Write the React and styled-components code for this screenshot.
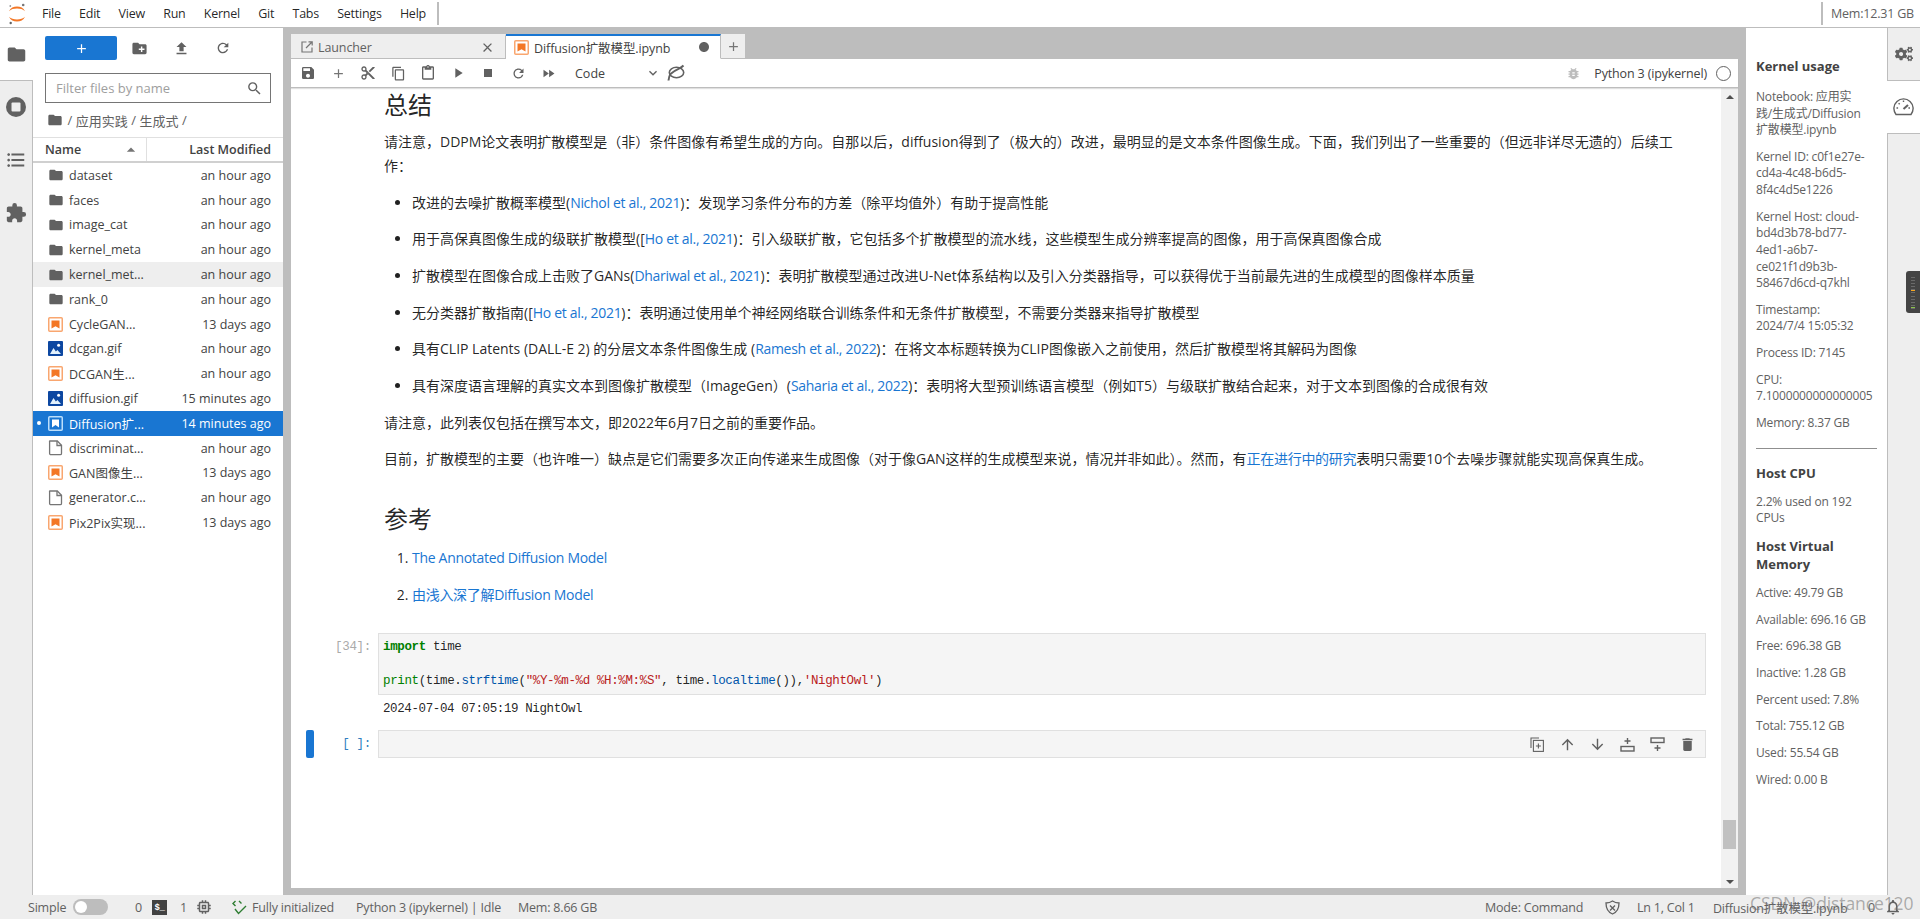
import React from 'react'
import styled, { createGlobalStyle } from 'styled-components'
import {
  MdFolder, MdAdd, MdCreateNewFolder, MdFileUpload, MdRefresh, MdSearch, MdFormatListBulleted,
  MdExtension, MdSave, MdContentCut, MdContentCopy, MdContentPaste, MdPlayArrow, MdStop,
  MdFastForward, MdKeyboardArrowDown, MdClose, MdArrowUpward, MdArrowDownward, MdDelete,
  MdBugReport, MdOutlineMemory, MdOutlineNotifications, MdArrowDropUp, MdCircle,
} from 'react-icons/md'
import { FaCogs } from 'react-icons/fa'

const SANS = `"Open Sans", "Noto Sans CJK SC", sans-serif`

const GlobalStyle = createGlobalStyle`
  html, body { margin: 0; padding: 0; height: 100%; overflow: hidden; }
  body { font-family: ${SANS}; font-size: 13px; color: rgba(0,0,0,.87); background: #fff; }
  * { box-sizing: border-box; }
`

const Page = styled.div`
  position: relative;
  display: flex;
  flex-direction: column;
  width: 1920px;
  height: 919px;
  overflow: hidden;
`

/* ---------- top menu ---------- */
const TopBar = styled.div`
  display: flex;
  align-items: center;
  height: 28px;
  flex: none;
  border-bottom: 1px solid #bdbdbd;
  padding-left: 8px;
`
const MenuItems = styled.div`
  display: flex;
  margin-left: 16px;
  gap: 18.3px;
  align-items: center;
  font-size: 12.5px;
  letter-spacing: -.25px;
  padding-right: 11px;
  border-right: 2px solid #bdbdbd;
  height: 23px;
`
const MemTop = styled.div`
  margin-left: auto;
  height: 23px;
  line-height: 23px;
  border-left: 2px solid #bdbdbd;
  padding: 0 6px 0 8px;
  font-size: 12.5px;
  letter-spacing: -.2px;
  color: #616161;
  white-space: nowrap;
`

const Body = styled.div`
  display: flex;
  flex: 1;
  min-height: 0;
  background: #bdbdbd;
`

/* ---------- left activity bar ---------- */
const SideBar = styled.div`
  width: 33px;
  flex: none;
  background: #eee;
  display: flex;
  flex-direction: column;
  align-items: center;
  color: #616161;
  font-size: 20px;
`
const SideActive = styled.div`
  width: 100%;
  height: 52px;
  background: #fff;
  display: flex;
  align-items: center;
  justify-content: center;
  font-size: 21px;
  padding-right: 1px;
`
const SideItem = styled.div`
  width: 100%;
  height: 53px;
  border-right: 1px solid #bdbdbd;
  display: flex;
  align-items: center;
  justify-content: center;
  font-size: ${p => p.$size || 20}px;
`
const SideRest = styled.div`
  flex: 1;
  width: 100%;
  border-right: 1px solid #bdbdbd;
`
const SideFirst = styled(SideItem)`
  border-top: 1px solid #bdbdbd;
`

/* ---------- file browser ---------- */
const FilePanel = styled.div`
  width: 250px;
  flex: none;
  background: #fff;
  display: flex;
  flex-direction: column;
  margin-right: 8px;
`
const FileTools = styled.div`
  display: flex;
  align-items: center;
  padding: 8px 0 0 12px;
  height: 32px;
  color: #616161;
  flex: none;
`
const NewButton = styled.div`
  width: 72px;
  height: 24px;
  border-radius: 2px;
  background: #1976d2;
  color: #fff;
  display: flex;
  align-items: center;
  justify-content: center;
  font-size: 15px;
  margin-right: 1px;
`
const ToolIcon = styled.div`
  width: 42px;
  display: flex;
  justify-content: center;
  font-size: ${p => p.$size || 17}px;
  color: #616161;
`
const FilterBox = styled.div`
  margin: 13px 12px 0;
  height: 30px;
  border: 1px solid #757575;
  display: flex;
  align-items: center;
  justify-content: space-between;
  padding: 0 7px 0 10px;
  color: #9e9e9e;
  font-size: 13px;
  flex: none;
  svg { color: #616161; font-size: 17px; }
`
const Crumbs = styled.div`
  display: flex;
  align-items: center;
  gap: 3.5px;
  height: 34px;
  padding-left: 14px;
  font-size: 13px;
  color: #616161;
  flex: none;
  svg { font-size: 16px; margin-right: 1px; }
`
const ListHead = styled.div`
  display: flex;
  height: 26px;
  flex: none;
  border-top: 1px solid #e0e0e0;
  border-bottom: 2px solid #d0d0d0;
  font-size: 12.5px;
  font-weight: 600;
  color: #424242;
  line-height: 24px;
`
const HeadName = styled.div`
  width: 114px;
  padding-left: 12px;
  border-right: 1px solid #e0e0e0;
  display: flex;
  justify-content: space-between;
  padding-right: 5px;
  align-items: center;
  svg { color: #757575; font-size: 20px; }
`
const HeadDate = styled.div`
  flex: 1;
  text-align: right;
  padding-right: 12px;
  white-space: nowrap;
`
const Row = styled.div`
  position: relative;
  display: flex;
  align-items: center;
  height: 24.8px;
  padding: 0 12px 0 15px;
  font-size: 12.5px;
  white-space: nowrap;
  color: ${p => (p.$selected ? '#fff' : '#424242')};
  background: ${p => (p.$selected ? '#1976d2' : p.$hover ? '#eee' : 'transparent')};
`
const RowIcon = styled.span`
  width: 21px;
  display: flex;
  flex: none;
  font-size: 16px;
  color: #616161;
`
const RowName = styled.span`
  flex: 1;
  min-width: 0;
`
const RowDate = styled.span`
  flex: none;
`
const RunDot = styled.span`
  position: absolute;
  left: 4px;
  top: 10px;
  width: 4px;
  height: 4px;
  border-radius: 50%;
  background: #fff;
`

/* ---------- notebook ---------- */
const Main = styled.div`
  flex: 1;
  min-width: 0;
  display: flex;
  flex-direction: column;
  padding-top: 6px;
`
const TabBar = styled.div`
  display: flex;
  height: 25px;
  flex: none;
`
const Tab = styled.div`
  width: 215px;
  display: flex;
  align-items: center;
  padding: 0 10px 0 ${p => (p.$active ? 8 : 10)}px;
  font-size: 12.5px;
  color: ${p => (p.$active ? '#424242' : '#616161')};
  background: ${p => (p.$active ? '#fff' : '#eee')};
  border-top: 2px solid ${p => (p.$active ? '#1976d2' : '#eee')};
  border-bottom: 1px solid ${p => (p.$active ? '#fff' : '#bdbdbd')};
  border-right: 1px solid #bdbdbd;
  white-space: nowrap;
`
const TabTitle = styled.span`
  flex: 1;
  margin-left: 5px;
  letter-spacing: -.1px;
`
const PlusTab = styled.div`
  width: 24px;
  background: #eee;
  border-bottom: 1px solid #bdbdbd;
  display: flex;
  align-items: center;
  justify-content: center;
  color: #757575;
  font-size: 15px;
`
const Toolbar = styled.div`
  display: flex;
  align-items: center;
  height: 29px;
  flex: none;
  background: #fff;
  border-bottom: 1px solid #bdbdbd;
  box-shadow: 0 1px 1px rgba(0,0,0,.12);
  padding-left: 2px;
  color: #616161;
  z-index: 1;
`
const TBtn = styled.div`
  width: 30px;
  display: flex;
  justify-content: center;
  align-items: center;
  font-size: ${p => p.$size || 16}px;
  color: ${p => p.$color || '#616161'};
`
const CellType = styled.div`
  width: 86px;
  display: flex;
  align-items: center;
  justify-content: space-between;
  margin-left: 12px;
  font-size: 12.5px;
  color: #424242;
  svg { font-size: 16px; color: #616161; }
`
const KernelName = styled.div`
  margin-left: auto;
  display: flex;
  align-items: center;
  gap: 9px;
  padding-right: 7px;
  font-size: 12.5px;
  letter-spacing: -.15px;
  color: #424242;
  white-space: nowrap;
`
const BugIcon = styled.span`
  display: flex;
  color: #bdbdbd;
  font-size: 15px;
  margin-right: 4px;
`
const KernelDot = styled.span`
  width: 15px;
  height: 15px;
  border: 1.5px solid #616161;
  border-radius: 50%;
`
const NotebookWrap = styled.div`
  flex: 1;
  min-height: 0;
  display: flex;
  background: #fff;
`
const Notebook = styled.div`
  flex: 1;
  min-width: 0;
  overflow: hidden;
  padding: 0 15px 0 15px;
`
const Prose = styled.div`
  padding: 2px 32px 0 78px;
  font-size: 14px;
  line-height: 24px;
  color: rgba(0,0,0,.87);
`
const H2 = styled.h2`
  margin: 0 0 10px;
  font-size: 24px;
  line-height: 30px;
  font-weight: 400;
`
const H2Next = styled(H2)`
  margin: 33px 0 12px;
`
const P = styled.p`
  margin: 0 0 12.6px;
`
const Ul = styled.ul`
  margin: 0 0 9px;
  padding: 0 0 0 28px;
`
const Ol = styled.ol`
  margin: 0;
  padding: 0 0 0 28px;
`
const Li = styled.li`
  margin-bottom: 12.7px;
`
const A = styled.a`
  color: #1976d2;
  text-decoration: none;
  letter-spacing: -.3px;
`
const CellRow = styled.div`
  position: relative;
  display: flex;
  margin-top: ${p => p.$top || 0}px;
`
const CellMark = styled.div`
  position: absolute;
  left: 0;
  top: 0;
  bottom: 0;
  width: 8px;
  background: #1976d2;
  border-radius: 2px;
`
const Prompt = styled.div`
  width: 72px;
  flex: none;
  text-align: right;
  padding: 6px 7px 0 0;
  font-family: "Liberation Mono", monospace;
  font-size: 12.5px;
  letter-spacing: -.3px;
  line-height: 17px;
  color: ${p => (p.$active ? '#307fc1' : '#aaa')};
  white-space: pre;
`
const CodeBox = styled.div`
  position: relative;
  flex: 1;
  min-width: 0;
  background: #f5f5f5;
  border: 1px solid #e0e0e0;
  padding: 5px 4px;
  height: ${p => p.$h}px;
  font-family: "Liberation Mono", monospace;
  font-size: 12.5px;
  letter-spacing: -.37px;
  line-height: 17px;
  white-space: pre;
`
const Kw = styled.span`
  color: #008000;
  font-weight: ${p => (p.$bold ? 700 : 400)};
`
const Fn = styled.span`
  color: #05a;
`
const Str = styled.span`
  color: #ba2121;
`
const Output = styled.div`
  margin: 6px 0 0 72px;
  padding-left: 5px;
  height: 22px;
  font-family: "Liberation Mono", monospace;
  font-size: 12.5px;
  letter-spacing: -.39px;
  line-height: 17px;
  white-space: pre;
`
const CellTools = styled.div`
  position: absolute;
  right: 3px;
  top: 0;
  bottom: 0;
  display: flex;
  align-items: center;
  color: #616161;
  font-size: 17px;
`
const CellTool = styled.span`
  width: 30px;
  display: flex;
  justify-content: center;
`
const Scroll = styled.div`
  position: relative;
  width: 17px;
  flex: none;
  background: #f1f1f1;
  display: flex;
  flex-direction: column;
  justify-content: space-between;
  align-items: center;
  padding: 7px 0 4px;
`
const Arrow = styled.span`
  width: 0;
  height: 0;
  border-left: 4px solid transparent;
  border-right: 4px solid transparent;
  ${p => (p.$down ? 'border-top: 4px solid #505050;' : 'border-bottom: 4px solid #505050;')}
`
const Thumb = styled.div`
  position: absolute;
  left: 2px;
  right: 2px;
  top: 732px;
  height: 29px;
  background: #c1c1c1;
`
const MainBottom = styled.div`
  height: 7px;
  flex: none;
`

/* ---------- kernel usage ---------- */
const UsagePanel = styled.div`
  width: 141px;
  flex: none;
  margin-left: 8px;
  background: #fff;
  padding: 29px 10px 0;
  font-size: 12px;
  line-height: 16.6px;
  color: #616161;
  white-space: nowrap;
  letter-spacing: -.18px;
`
const UsageTitle = styled.div`
  font-weight: 700;
  color: #424242;
  margin-bottom: 12px;
  font-size: 13px;
  letter-spacing: 0;
  line-height: 18px;
`
const UsageHead = styled(UsageTitle)`
  margin-bottom: 14px;
`
const Stat = styled.div`
  margin-bottom: 10.1px;
`
const UsageHr = styled.div`
  border-top: 1px solid #8f8f8f;
  margin: 16px 0 15px;
`
const RightBar = styled.div`
  position: relative;
  width: 33px;
  flex: none;
  background: #eee;
  display: flex;
  flex-direction: column;
  color: #616161;
`
const RightTab = styled.div`
  height: 53px;
  display: flex;
  align-items: center;
  justify-content: center;
  background: ${p => (p.$active ? '#fff' : '#eee')};
  border-left: ${p => (p.$active ? 'none' : '1px solid #bdbdbd')};
  border-bottom: 1px solid #bdbdbd;
  font-size: 18px;
`
const RightRest = styled.div`
  flex: 1;
  border-left: 1px solid #bdbdbd;
`
const Gauges = styled.div`
  position: absolute;
  right: 0;
  top: 243px;
  width: 14px;
  height: 42px;
  background: #444;
  border-radius: 3px 0 0 3px;
`

/* ---------- status bar ---------- */
const StatusBar = styled.div`
  display: flex;
  align-items: center;
  height: 24px;
  flex: none;
  background: #eee;
  font-size: 12.5px;
  letter-spacing: -.2px;
  color: #616161;
  white-space: nowrap;
`
const SItem = styled.span`
  display: flex;
  align-items: center;
  width: ${p => p.$w}px;
  flex: none;
  font-size: ${p => p.$size || 12.5}px;
  color: #616161;
`
const Toggle = styled.span`
  width: 35px;
  height: 16px;
  border-radius: 8px;
  background: #bdbdbd;
  padding: 2px;
  display: flex;
  span { width: 12px; height: 12px; border-radius: 50%; background: #fff; }
`
const Term = styled.span`
  width: 15px;
  height: 15px;
  background: #424242;
  color: #fff;
  font-family: "Liberation Mono", monospace;
  font-size: 9px;
  font-weight: 700;
  line-height: 16px;
  text-align: center;
  letter-spacing: -.5px;
`
const Watermark = styled.div`
  position: absolute;
  left: 1750px;
  top: 892px;
  font-size: 17.5px;
  line-height: 22px;
  letter-spacing: -.1px;
  color: rgba(110,110,110,.55);
  white-space: nowrap;
`

/* ---------- drawn icons ---------- */
const NotebookIcon = ({ light }) => (
  <svg width="15" height="15" viewBox="0 0 15 15">
    {light ? (
      <>
        <rect x=".75" y=".75" width="13.5" height="13.5" rx="1" fill="#1976d2" stroke="#bbdefb" strokeWidth="1.5" />
        <path d="M4 3.5h7v8L7.5 9 4 11.5z" fill="#fff" />
      </>
    ) : (
      <>
        <rect x=".75" y=".75" width="13.5" height="13.5" rx="1" fill="#fff" stroke="#f9a66f" strokeWidth="1.5" />
        <path d="M3.5 3.5h8v8L7.5 9.3l-4 2.2z" fill="#f37726" />
      </>
    )}
  </svg>
)
const ImageIcon = () => (
  <svg width="15" height="15" viewBox="0 0 15 15">
    <rect width="15" height="15" rx="1" fill="#0d47a1" />
    <circle cx="10.6" cy="4.2" r="1.5" fill="#fff" />
    <path d="M2 13l3.5-6 2.4 3.6 1.5-1.6 3.6 4z" fill="#e3f2fd" />
  </svg>
)
const FileIcon = () => (
  <svg width="15" height="16" viewBox="0 0 15 16" fill="none" stroke="#757575" strokeWidth="1.3">
    <path d="M1.7 1h7.6l4.2 4.2v8.2a1.3 1.3 0 0 1-1.3 1.3H2.9a1.3 1.3 0 0 1-1.3-1.3V2.2A1.2 1.2 0 0 1 1.7 1z" />
    <path d="M9 1v4.5h4.5" />
  </svg>
)
const JupyterLogo = () => (
  <svg width="18" height="22" viewBox="0 0 18 22">
    <path d="M1 8.2C2.5 4.8 5.6 3.4 9 3.4s6.5 1.4 8 4.8C15 6.3 12.2 5.6 9 5.6S3 6.3 1 8.2z" fill="#f37726" />
    <path d="M1 13.8c1.5 3.4 4.6 4.8 8 4.8s6.5-1.4 8-4.8c-2 1.9-4.8 2.6-8 2.6s-6-.7-8-2.6z" fill="#f37726" />
    <circle cx="15.2" cy="2" r="1.3" fill="#767677" />
    <circle cx="2.3" cy="3" r=".9" fill="#989798" />
    <circle cx="2.7" cy="20" r="1.2" fill="#616262" />
  </svg>
)
const Stopped = () => (
  <svg width="20" height="20" viewBox="0 0 20 20">
    <circle cx="10" cy="10" r="10" fill="#616161" />
    <rect x="5.5" y="5.5" width="9" height="9" rx="1" fill="#eee" />
  </svg>
)
const Launch = () => (
  <svg width="12" height="12" viewBox="0 0 12 12" fill="none" stroke="#757575" strokeWidth="1.2">
    <path d="M5.5 1H1v10h10V6.5" />
    <path d="M5 7l6-6M7.5 .8h3.7v3.7" />
  </svg>
)
const Sync = () => (
  <svg width="18" height="18" viewBox="0 0 18 18" fill="none" stroke="#616161">
    <ellipse cx="9.5" cy="8.5" rx="7.2" ry="5.2" strokeWidth="1.6" />
    <path d="M16.5 1.500C12 6 10 4 3.500 10c-1.500 2-1.800 4-2 6.500" strokeWidth="2" />
  </svg>
)
const Gauge = () => (
  <svg width="21" height="18" viewBox="0 0 21 18" fill="none" stroke="#616161" strokeWidth="1.4">
    <path d="M3 16.5a9.6 9.6 0 1 1 15 0z" />
    <path d="M10.5 11l4.5-4" strokeWidth="2" />
    <path d="M10.5 2.5v1.6M3.5 10h1.6M17 10h-1.6M5.6 5.2l1.1 1.1" />
  </svg>
)
const Dup = () => (
  <svg width="14" height="15" viewBox="0 0 14 15" fill="none" stroke="#616161" strokeWidth="1.1">
    <path d="M1 11V1h8" />
    <rect x="3.4" y="3.4" width="10" height="11" />
    <path d="M8.4 6.5v5M5.900 9h5" />
  </svg>
)
const InsertAbove = () => (
  <svg width="15" height="15" viewBox="0 0 15 15" fill="none" stroke="#616161" strokeWidth="1.4">
    <rect x="1" y="9.5" width="13" height="4.5" />
    <path d="M7.5 1v6M4.5 4h6" />
  </svg>
)
const InsertBelow = () => (
  <svg width="15" height="15" viewBox="0 0 15 15" fill="none" stroke="#616161" strokeWidth="1.4">
    <rect x="1" y="1" width="13" height="4.5" />
    <path d="M7.5 8v6M4.5 11h6" />
  </svg>
)
const Shield = () => (
  <svg width="15" height="15" viewBox="0 0 15 15" fill="none" stroke="#616161" strokeWidth="1.3">
    <path d="M7.5 1C9.5 2.4 11.5 3 14 3c0 5-1.6 9-6.5 11C2.6 12 1 8 1 3c2.5 0 4.5-.6 6.5-2z" />
    <path d="M5 5.5l5 5M10 5.5l-5 5" />
  </svg>
)
const Initialized = () => (
  <svg width="16" height="15" viewBox="0 0 16 15" fill="none" stroke="#2e7d32" strokeWidth="1.4">
    <path d="M3.5 1L1 3.5 3.5 6M7 1l2.5 2.5" />
    <path d="M3 9l3.5 4.500L14 6" />
  </svg>
)
const MeterBars = () => (
  <svg width="14" height="42" viewBox="0 0 14 42">
    {[6, 9, 12, 15, 18, 21].map(y => <rect key={y} x="5" y={y} width="4" height="1" fill="#6a6a6a" />)}
    <rect x="5" y="19" width="4" height="1" fill="#f5a623" />
    {[25, 28, 31, 34, 37].map(y => <rect key={y} x="5" y={y} width="4" height="1" fill="#6a6a6a" />)}
    <rect x="5" y="36" width="4" height="1" fill="#8bc34a" />
  </svg>
)

const folders = ['dataset', 'faces', 'image_cat', 'kernel_meta', 'kernel_met...', 'rank_0']
const files = [
  { name: 'CycleGAN...', date: '13 days ago', icon: 'nb' },
  { name: 'dcgan.gif', date: 'an hour ago', icon: 'img' },
  { name: 'DCGAN生...', date: 'an hour ago', icon: 'nb' },
  { name: 'diffusion.gif', date: '15 minutes ago', icon: 'img' },
  { name: 'Diffusion扩...', date: '14 minutes ago', icon: 'nb', selected: true },
  { name: 'discriminat...', date: 'an hour ago', icon: 'file' },
  { name: 'GAN图像生...', date: '13 days ago', icon: 'nb' },
  { name: 'generator.c...', date: 'an hour ago', icon: 'file' },
  { name: 'Pix2Pix实现...', date: '13 days ago', icon: 'nb' },
]

const fileIcon = f => {
  if (f.icon === 'nb') return <NotebookIcon light={f.selected} />
  if (f.icon === 'img') return <ImageIcon />
  return <FileIcon />
}

const App = () => {
  return (
    <Page>
      <GlobalStyle />
      <TopBar>
        <JupyterLogo />
        <MenuItems>
          <span>File</span><span>Edit</span><span>View</span><span>Run</span><span>Kernel</span>
          <span>Git</span><span>Tabs</span><span>Settings</span><span>Help</span>
        </MenuItems>
        <MemTop>Mem:12.31 GB</MemTop>
      </TopBar>

      <Body>
        <SideBar>
          <SideActive><MdFolder /></SideActive>
          <SideFirst><Stopped /></SideFirst>
          <SideItem $size={22}><MdFormatListBulleted /></SideItem>
          <SideItem $size={22}><MdExtension /></SideItem>
          <SideRest />
        </SideBar>

        <FilePanel>
          <FileTools>
            <NewButton><MdAdd /></NewButton>
            <ToolIcon><MdCreateNewFolder /></ToolIcon>
            <ToolIcon><MdFileUpload /></ToolIcon>
            <ToolIcon $size={16}><MdRefresh /></ToolIcon>
          </FileTools>
          <FilterBox>Filter files by name<MdSearch /></FilterBox>
          <Crumbs><MdFolder /><span>/</span><span>应用实践</span><span>/</span><span>生成式</span><span>/</span></Crumbs>
          <ListHead>
            <HeadName>Name<MdArrowDropUp /></HeadName>
            <HeadDate>Last Modified</HeadDate>
          </ListHead>
          {folders.map((name, i) => (
            <Row key={name} $hover={i === 4}>
              <RowIcon><MdFolder /></RowIcon>
              <RowName>{name}</RowName>
              <RowDate>an hour ago</RowDate>
            </Row>
          ))}
          {files.map(f => (
            <Row key={f.name} $selected={f.selected}>
              {f.selected && <RunDot />}
              <RowIcon>{fileIcon(f)}</RowIcon>
              <RowName>{f.name}</RowName>
              <RowDate>{f.date}</RowDate>
            </Row>
          ))}
        </FilePanel>

        <Main>
          <TabBar>
            <Tab>
              <Launch />
              <TabTitle>Launcher</TabTitle>
              <MdClose size={15} color="#616161" />
            </Tab>
            <Tab $active>
              <NotebookIcon />
              <TabTitle>Diffusion扩散模型.ipynb</TabTitle>
              <MdCircle size={12} color="#616161" />
            </Tab>
            <PlusTab><MdAdd /></PlusTab>
          </TabBar>
          <Toolbar>
            <TBtn><MdSave /></TBtn>
            <TBtn $size={15} $color="#757575"><MdAdd /></TBtn>
            <TBtn><MdContentCut /></TBtn>
            <TBtn $size={15}><MdContentCopy /></TBtn>
            <TBtn $size={16}><MdContentPaste /></TBtn>
            <TBtn><MdPlayArrow /></TBtn>
            <TBtn><MdStop /></TBtn>
            <TBtn $size={15}><MdRefresh /></TBtn>
            <TBtn $size={15}><MdFastForward /></TBtn>
            <CellType>Code<MdKeyboardArrowDown /></CellType>
            <TBtn><Sync /></TBtn>
            <KernelName>
              <BugIcon><MdBugReport /></BugIcon>
              Python 3 (ipykernel)
              <KernelDot />
            </KernelName>
          </Toolbar>
          <NotebookWrap>
            <Notebook>
              <Prose>
                <H2>总结</H2>
                <P>请注意，DDPM论文表明扩散模型是（非）条件图像有希望生成的方向。自那以后，diffusion得到了（极大的）改进，最明显的是文本条件图像生成。下面，我们列出了一些重要的（但远非详尽无遗的）后续工作：</P>
                <Ul>
                  <Li>改进的去噪扩散概率模型(<A>Nichol et al., 2021</A>)：发现学习条件分布的方差（除平均值外）有助于提高性能</Li>
                  <Li>用于高保真图像生成的级联扩散模型([<A>Ho et al., 2021</A>)：引入级联扩散，它包括多个扩散模型的流水线，这些模型生成分辨率提高的图像，用于高保真图像合成</Li>
                  <Li>扩散模型在图像合成上击败了GANs(<A>Dhariwal et al., 2021</A>)：表明扩散模型通过改进U-Net体系结构以及引入分类器指导，可以获得优于当前最先进的生成模型的图像样本质量</Li>
                  <Li>无分类器扩散指南([<A>Ho et al., 2021</A>)：表明通过使用单个神经网络联合训练条件和无条件扩散模型，不需要分类器来指导扩散模型</Li>
                  <Li>具有CLIP Latents (DALL-E 2) 的分层文本条件图像生成 (<A>Ramesh et al., 2022</A>)：在将文本标题转换为CLIP图像嵌入之前使用，然后扩散模型将其解码为图像</Li>
                  <Li>具有深度语言理解的真实文本到图像扩散模型（ImageGen）(<A>Saharia et al., 2022</A>)：表明将大型预训练语言模型（例如T5）与级联扩散结合起来，对于文本到图像的合成很有效</Li>
                </Ul>
                <P>请注意，此列表仅包括在撰写本文，即2022年6月7日之前的重要作品。</P>
                <P>目前，扩散模型的主要（也许唯一）缺点是它们需要多次正向传递来生成图像（对于像GAN这样的生成模型来说，情况并非如此）。然而，有<A>正在进行中的研究</A>表明只需要10个去噪步骤就能实现高保真生成。</P>
                <H2Next>参考</H2Next>
                <Ol>
                  <Li><A>The Annotated Diffusion Model</A></Li>
                  <Li><A>由浅入深了解Diffusion Model</A></Li>
                </Ol>
              </Prose>
              <CellRow $top={26}>
                <Prompt>[34]:</Prompt>
                <CodeBox $h={62}>
                  <Kw $bold>import</Kw> time{'\n\n'}<Kw>print</Kw>(time.<Fn>strftime</Fn>(<Str>"%Y-%m-%d %H:%M:%S"</Str>, time.<Fn>localtime</Fn>()),<Str>'NightOwl'</Str>)
                </CodeBox>
              </CellRow>
              <Output>2024-07-04 07:05:19 NightOwl</Output>
              <CellRow $top={7}>
                <CellMark />
                <Prompt $active>[ ]:</Prompt>
                <CodeBox $h={28}>
                  <CellTools>
                    <CellTool><Dup /></CellTool>
                    <CellTool><MdArrowUpward /></CellTool>
                    <CellTool><MdArrowDownward /></CellTool>
                    <CellTool><InsertAbove /></CellTool>
                    <CellTool><InsertBelow /></CellTool>
                    <CellTool><MdDelete /></CellTool>
                  </CellTools>
                </CodeBox>
              </CellRow>
            </Notebook>
            <Scroll>
              <Arrow />
              <Thumb />
              <Arrow $down />
            </Scroll>
          </NotebookWrap>
          <MainBottom />
        </Main>

        <UsagePanel>
          <UsageHead>Kernel usage</UsageHead>
          <Stat>Notebook: 应用实<br />践/生成式/Diffusion<br />扩散模型.ipynb</Stat>
          <Stat>Kernel ID: c0f1e27e-<br />cd4a-4c48-b6d5-<br />8f4c4d5e1226</Stat>
          <Stat>Kernel Host: cloud-<br />bd4d3b78-bd77-<br />4ed1-a6b7-<br />ce021f1d9b3b-<br />58467d6cd-q7khl</Stat>
          <Stat>Timestamp:<br />2024/7/4 15:05:32</Stat>
          <Stat>Process ID: 7145</Stat>
          <Stat>CPU:<br />7.1000000000000005</Stat>
          <Stat>Memory: 8.37 GB</Stat>
          <UsageHr />
          <UsageTitle>Host CPU</UsageTitle>
          <Stat>2.2% used on 192<br />CPUs</Stat>
          <UsageTitle>Host Virtual<br />Memory</UsageTitle>
          <Stat>Active: 49.79 GB</Stat>
          <Stat>Available: 696.16 GB</Stat>
          <Stat>Free: 696.38 GB</Stat>
          <Stat>Inactive: 1.28 GB</Stat>
          <Stat>Percent used: 7.8%</Stat>
          <Stat>Total: 755.12 GB</Stat>
          <Stat>Used: 55.54 GB</Stat>
          <Stat>Wired: 0.00 B</Stat>
        </UsagePanel>

        <RightBar>
          <RightTab><FaCogs /></RightTab>
          <RightTab $active><Gauge /></RightTab>
          <RightRest />
          <Gauges><MeterBars /></Gauges>
        </RightBar>
      </Body>

      <StatusBar>
        <SItem $w={28} />
        <SItem $w={45}>Simple</SItem>
        <SItem $w={62}><Toggle><span /></Toggle></SItem>
        <SItem $w={17}>0</SItem>
        <SItem $w={28}><Term>$_</Term></SItem>
        <SItem $w={15}>1</SItem>
        <SItem $w={37} $size={18}><MdOutlineMemory /></SItem>
        <SItem $w={20}><Initialized /></SItem>
        <SItem $w={104}>Fully initialized</SItem>
        <SItem $w={162}>Python 3 (ipykernel) | Idle</SItem>
        <SItem $w={967}>Mem: 8.66 GB</SItem>
        <SItem $w={120}>Mode: Command</SItem>
        <SItem $w={32}><Shield /></SItem>
        <SItem $w={76}>Ln 1, Col 1</SItem>
        <SItem $w={155}>Diffusion扩散模型.ipynb</SItem>
        <SItem $w={16}>0</SItem>
        <SItem $w={20} $size={18}><MdOutlineNotifications /></SItem>
      </StatusBar>
      <Watermark>CSDN @distance120</Watermark>
    </Page>
  )
}

export default App
